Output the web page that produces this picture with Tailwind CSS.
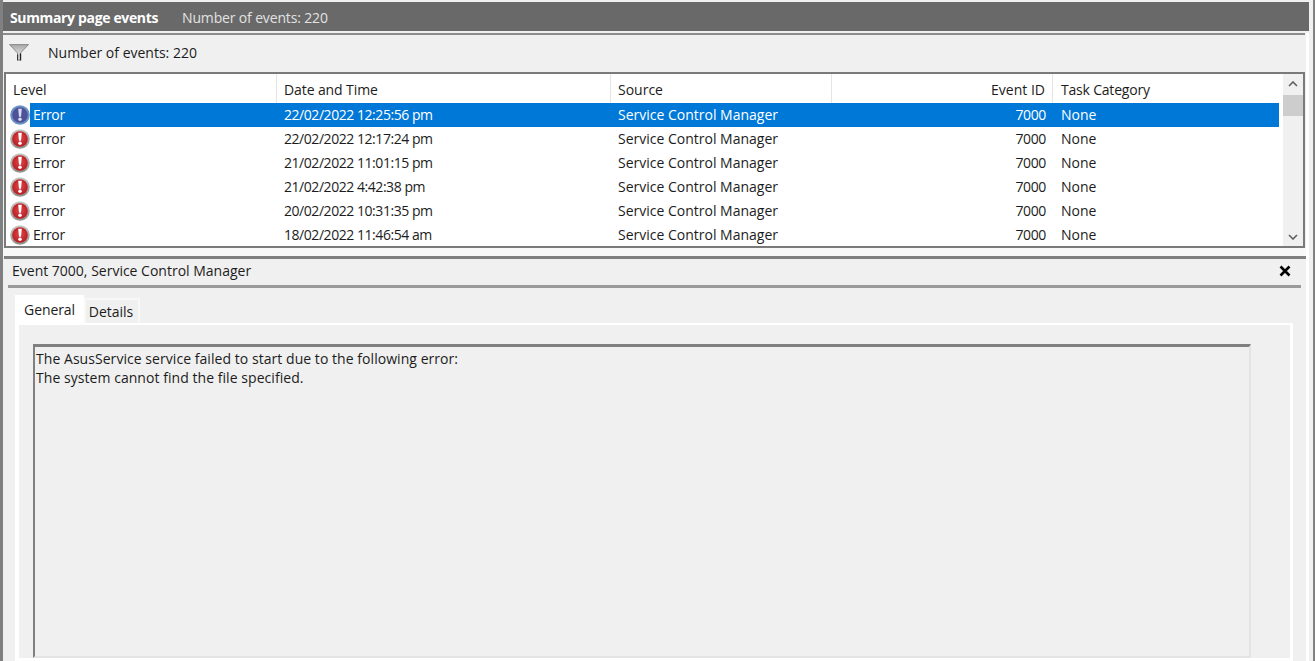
<!DOCTYPE html>
<html lang="en">

<head>
    <meta charset="UTF-8">
    <title>Summary page events</title>
    <script src="https://cdn.jsdelivr.net/npm/@tailwindcss/browser@4"></script>
</head>

<body class="bg-[#f0f0f0] overflow-hidden">

    <!-- hidden icon defs -->
    <svg width="0" height="0" class="absolute">
        <defs>
            <radialGradient id="redFill" cx="50%" cy="45%" r="60%">
                <stop offset="0%" stop-color="#e4474a" />
                <stop offset="100%" stop-color="#b3171d" />
            </radialGradient>
            <linearGradient id="ring" x1="0" y1="0" x2="0" y2="1">
                <stop offset="0%" stop-color="#c9c9c9" />
                <stop offset="100%" stop-color="#8f8f8f" />
            </linearGradient>
            <linearGradient id="funnel" x1="0" y1="0" x2="0" y2="1">
                <stop offset="0%" stop-color="#a8a8a8" />
                <stop offset="100%" stop-color="#fafafa" />
            </linearGradient>
            <symbol id="errorIcon" viewBox="0 0 20 20">
                <circle cx="10" cy="10" r="9.8" fill="url(#ring)" />
                <circle cx="10" cy="10" r="7.8" fill="url(#redFill)" />
                <path d="M8.2 3.8h3.6l-.8 8H9z" fill="#fff" />
                <circle cx="10" cy="14.3" r="1.7" fill="#fff" />
            </symbol>
            <symbol id="errorIconSelected" viewBox="0 0 20 20">
                <circle cx="10" cy="10" r="9.8" fill="#6c93c4" />
                <circle cx="10" cy="10" r="7.8" fill="#4d5299" />
                <path d="M8.2 3.8h3.6l-.8 8H9z" fill="#d8dcf2" />
                <circle cx="10" cy="14.3" r="1.7" fill="#d8dcf2" />
            </symbol>
        </defs>
    </svg>

    <div class="h-[661px] w-[1315px] overflow-hidden flex flex-col border-l-[3px] border-r-2 border-[#808080] font-['Open_Sans',sans-serif] text-[14px] text-[#1c1c1c]">

        <!-- title bar -->
        <div class="mt-[2px] -ml-[3px] w-[1309px] h-[29px] shrink-0 bg-[#696969] flex items-center pl-[10px] pt-[2px]">
            <span class="font-bold text-white w-[172px] tracking-[-0.35px]">Summary page events</span>
            <span class="text-[#e2e2e2] tracking-[-0.15px]">Number of events: 220</span>
        </div>

        <div class="mt-[2px] w-[1306px] flex-1 min-h-0 flex flex-col border-r-[3px] border-white">
            <!-- summary panel -->
            <div class="w-[1302px] h-[2px] shrink-0 bg-[#8c8c8c]"></div>
            <div class="h-[37px] shrink-0 flex items-center">
                <svg class="ml-[6px] mb-[2px] w-[20px] h-[17px]" viewBox="0 0 20 17">
                    <path d="M.5.6h19l-8 8.4v7h-3V9z" fill="url(#funnel)" stroke="#7a7a7a" stroke-width=".8" />
                    <path d="M8.2 10.5h1v6h-1zM10.8 9.5h1.4v7h-1.4z" fill="#222" />
                </svg>
                <span class="ml-[19px] pb-[2px]">Number of events: 220</span>
            </div>

            <!-- events table -->
            <div class="ml-[1px] w-[1301px] h-[176px] shrink-0 flex border-2 border-[#7a7a7a] bg-white">
                <div class="w-[1273px] shrink-0">
                    <div class="grid grid-cols-[271px_334px_221px_221px_226px] h-[29px] items-center">
                        <div class="pl-[7px] pt-[1px] h-full flex items-center border-r border-[#e5e5e5]">Level</div>
                        <div class="pl-[7px] pt-[1px] h-full flex items-center border-r border-[#e5e5e5] tracking-[-0.1px]">Date and Time</div>
                        <div class="pl-[7px] pt-[1px] h-full flex items-center border-r border-[#e5e5e5]">Source</div>
                        <div class="pr-[7px] pt-[1px] h-full flex items-center justify-end border-r border-[#e5e5e5]">Event ID</div>
                        <div class="pl-[8px] pt-[1px] h-full flex items-center tracking-[-0.2px]">Task Category</div>
                    </div>

                    <div class="flex h-[24px]">
                        <svg class="ml-[4px] w-[20px] h-[20px] mt-[2px] shrink-0"><use href="#errorIconSelected" /></svg>
                        <div class="grid grid-cols-[247px_334px_221px_221px_226px] items-center pb-[1px] bg-[#0078d7] text-white">
                            <div class="pl-[3px] tracking-[-0.3px]">Error</div>
                            <div class="pl-[7px] tracking-[-0.45px]">22/02/2022 12:25:56 pm</div>
                            <div class="pl-[7px]">Service Control Manager</div>
                            <div class="pr-[7px] text-right tracking-[-0.35px]">7000</div>
                            <div class="pl-[8px]">None</div>
                        </div>
                    </div>
                    <div class="flex h-[24px]">
                        <svg class="ml-[4px] w-[20px] h-[20px] mt-[2px] shrink-0"><use href="#errorIcon" /></svg>
                        <div class="grid grid-cols-[247px_334px_221px_221px_226px] items-center pb-[1px]">
                            <div class="pl-[3px] tracking-[-0.3px]">Error</div>
                            <div class="pl-[7px] tracking-[-0.45px]">22/02/2022 12:17:24 pm</div>
                            <div class="pl-[7px]">Service Control Manager</div>
                            <div class="pr-[7px] text-right tracking-[-0.35px]">7000</div>
                            <div class="pl-[8px]">None</div>
                        </div>
                    </div>
                    <div class="flex h-[24px]">
                        <svg class="ml-[4px] w-[20px] h-[20px] mt-[2px] shrink-0"><use href="#errorIcon" /></svg>
                        <div class="grid grid-cols-[247px_334px_221px_221px_226px] items-center pb-[1px]">
                            <div class="pl-[3px] tracking-[-0.3px]">Error</div>
                            <div class="pl-[7px] tracking-[-0.45px]">21/02/2022 11:01:15 pm</div>
                            <div class="pl-[7px]">Service Control Manager</div>
                            <div class="pr-[7px] text-right tracking-[-0.35px]">7000</div>
                            <div class="pl-[8px]">None</div>
                        </div>
                    </div>
                    <div class="flex h-[24px]">
                        <svg class="ml-[4px] w-[20px] h-[20px] mt-[2px] shrink-0"><use href="#errorIcon" /></svg>
                        <div class="grid grid-cols-[247px_334px_221px_221px_226px] items-center pb-[1px]">
                            <div class="pl-[3px] tracking-[-0.3px]">Error</div>
                            <div class="pl-[7px] tracking-[-0.45px]">21/02/2022 4:42:38 pm</div>
                            <div class="pl-[7px]">Service Control Manager</div>
                            <div class="pr-[7px] text-right tracking-[-0.35px]">7000</div>
                            <div class="pl-[8px]">None</div>
                        </div>
                    </div>
                    <div class="flex h-[24px]">
                        <svg class="ml-[4px] w-[20px] h-[20px] mt-[2px] shrink-0"><use href="#errorIcon" /></svg>
                        <div class="grid grid-cols-[247px_334px_221px_221px_226px] items-center pb-[1px]">
                            <div class="pl-[3px] tracking-[-0.3px]">Error</div>
                            <div class="pl-[7px] tracking-[-0.45px]">20/02/2022 10:31:35 pm</div>
                            <div class="pl-[7px]">Service Control Manager</div>
                            <div class="pr-[7px] text-right tracking-[-0.35px]">7000</div>
                            <div class="pl-[8px]">None</div>
                        </div>
                    </div>
                    <div class="flex h-[23px] overflow-hidden">
                        <svg class="ml-[4px] w-[20px] h-[20px] mt-[2px] shrink-0"><use href="#errorIcon" /></svg>
                        <div class="grid grid-cols-[247px_334px_221px_221px_226px] items-center pb-[1px]">
                            <div class="pl-[3px] tracking-[-0.3px]">Error</div>
                            <div class="pl-[7px] tracking-[-0.45px]">18/02/2022 11:46:54 am</div>
                            <div class="pl-[7px]">Service Control Manager</div>
                            <div class="pr-[7px] text-right tracking-[-0.35px]">7000</div>
                            <div class="pl-[8px]">None</div>
                        </div>
                    </div>
                </div>

                <!-- scrollbar -->
                <div class="ml-[4px] flex-1 bg-[#f0f0f0] flex flex-col items-center">
                    <svg class="mt-[7px] w-[10px] h-[6px]" viewBox="0 0 10 6"><path d="M1 5l4-4 4 4" fill="none" stroke="#606060" stroke-width="1.6" /></svg>
                    <div class="mt-[8px] w-full h-[21px] bg-[#cdcdcd]"></div>
                    <svg class="mt-auto mb-[6px] w-[10px] h-[6px]" viewBox="0 0 10 6"><path d="M1 1l4 4 4-4" fill="none" stroke="#606060" stroke-width="1.6" /></svg>
                </div>
            </div>

            <!-- details panel -->
            <div class="h-[8px] shrink-0 bg-[#f8f8f8]"></div>
            <div class="ml-[1px] w-[1302px] h-[3px] shrink-0 bg-[#808080]"></div>
            <div class="h-[26px] shrink-0 flex items-center justify-between pl-[9px] pr-[15px] pb-[3px]">
                <span>Event 7000, Service Control Manager</span>
                <svg class="w-[12px] h-[12px]" viewBox="0 0 12 12"><path d="M1.5 1.5l9 9M10.5 1.5l-9 9" stroke="#000" stroke-width="2.6" /></svg>
            </div>
            <div class="ml-[5px] w-[1293px] h-[3px] shrink-0 bg-[#9a9a9a]"></div>

            <!-- tabs -->
            <div class="ml-[12px] mt-[7px] h-[28px] shrink-0 flex items-end">
                <div class="w-[69px] h-[28px] bg-white flex items-center justify-center tracking-[-0.1px]">General</div>
                <div class="w-[56px] h-[25px] border-2 border-b-0 border-[#f8f8f8] flex items-center justify-center pr-[2px]">Details</div>
            </div>
            <div class="ml-[12px] w-[1278px] flex-1 border-[4px] border-t-2 border-r-[3px] border-white px-[14px] pt-[19px]">
                <div class="w-[1218px] h-[314px] border-t-[3px] border-l-[2px] border-r-2 border-b-2 border-t-[#808080] border-l-[#808080] border-r-[#e4e4e4] border-b-[#e4e4e4] pl-[1px] pt-[2px] leading-[19px] tracking-[0.05px]">
                    <p>The AsusService service failed to start due to the following error:</p>
                    <p>The system cannot find the file specified.</p>
                </div>
            </div>
        </div>
    </div>

</body>

</html>
